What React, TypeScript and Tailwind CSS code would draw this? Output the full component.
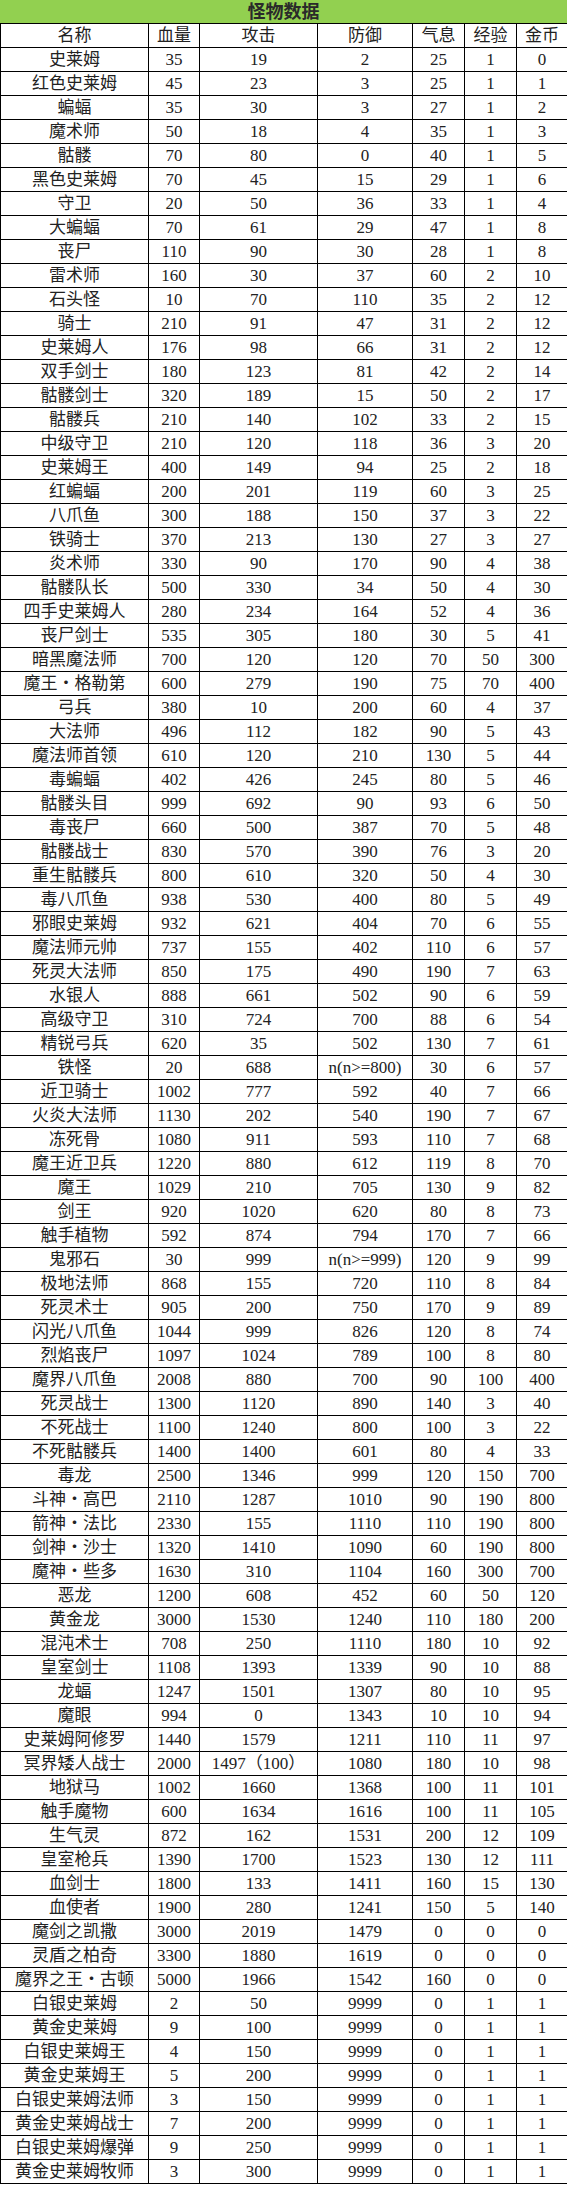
import React from "react";

type Row = [string, string, string, string, string, string, string];

const rows: Row[] = [
  ["史莱姆", "35", "19", "2", "25", "1", "0"],
  ["红色史莱姆", "45", "23", "3", "25", "1", "1"],
  ["蝙蝠", "35", "30", "3", "27", "1", "2"],
  ["魔术师", "50", "18", "4", "35", "1", "3"],
  ["骷髅", "70", "80", "0", "40", "1", "5"],
  ["黑色史莱姆", "70", "45", "15", "29", "1", "6"],
  ["守卫", "20", "50", "36", "33", "1", "4"],
  ["大蝙蝠", "70", "61", "29", "47", "1", "8"],
  ["丧尸", "110", "90", "30", "28", "1", "8"],
  ["雷术师", "160", "30", "37", "60", "2", "10"],
  ["石头怪", "10", "70", "110", "35", "2", "12"],
  ["骑士", "210", "91", "47", "31", "2", "12"],
  ["史莱姆人", "176", "98", "66", "31", "2", "12"],
  ["双手剑士", "180", "123", "81", "42", "2", "14"],
  ["骷髅剑士", "320", "189", "15", "50", "2", "17"],
  ["骷髅兵", "210", "140", "102", "33", "2", "15"],
  ["中级守卫", "210", "120", "118", "36", "3", "20"],
  ["史莱姆王", "400", "149", "94", "25", "2", "18"],
  ["红蝙蝠", "200", "201", "119", "60", "3", "25"],
  ["八爪鱼", "300", "188", "150", "37", "3", "22"],
  ["铁骑士", "370", "213", "130", "27", "3", "27"],
  ["炎术师", "330", "90", "170", "90", "4", "38"],
  ["骷髅队长", "500", "330", "34", "50", "4", "30"],
  ["四手史莱姆人", "280", "234", "164", "52", "4", "36"],
  ["丧尸剑士", "535", "305", "180", "30", "5", "41"],
  ["暗黑魔法师", "700", "120", "120", "70", "50", "300"],
  ["魔王・格勒第", "600", "279", "190", "75", "70", "400"],
  ["弓兵", "380", "10", "200", "60", "4", "37"],
  ["大法师", "496", "112", "182", "90", "5", "43"],
  ["魔法师首领", "610", "120", "210", "130", "5", "44"],
  ["毒蝙蝠", "402", "426", "245", "80", "5", "46"],
  ["骷髅头目", "999", "692", "90", "93", "6", "50"],
  ["毒丧尸", "660", "500", "387", "70", "5", "48"],
  ["骷髅战士", "830", "570", "390", "76", "3", "20"],
  ["重生骷髅兵", "800", "610", "320", "50", "4", "30"],
  ["毒八爪鱼", "938", "530", "400", "80", "5", "49"],
  ["邪眼史莱姆", "932", "621", "404", "70", "6", "55"],
  ["魔法师元帅", "737", "155", "402", "110", "6", "57"],
  ["死灵大法师", "850", "175", "490", "190", "7", "63"],
  ["水银人", "888", "661", "502", "90", "6", "59"],
  ["高级守卫", "310", "724", "700", "88", "6", "54"],
  ["精锐弓兵", "620", "35", "502", "130", "7", "61"],
  ["铁怪", "20", "688", "n(n>=800)", "30", "6", "57"],
  ["近卫骑士", "1002", "777", "592", "40", "7", "66"],
  ["火炎大法师", "1130", "202", "540", "190", "7", "67"],
  ["冻死骨", "1080", "911", "593", "110", "7", "68"],
  ["魔王近卫兵", "1220", "880", "612", "119", "8", "70"],
  ["魔王", "1029", "210", "705", "130", "9", "82"],
  ["剑王", "920", "1020", "620", "80", "8", "73"],
  ["触手植物", "592", "874", "794", "170", "7", "66"],
  ["鬼邪石", "30", "999", "n(n>=999)", "120", "9", "99"],
  ["极地法师", "868", "155", "720", "110", "8", "84"],
  ["死灵术士", "905", "200", "750", "170", "9", "89"],
  ["闪光八爪鱼", "1044", "999", "826", "120", "8", "74"],
  ["烈焰丧尸", "1097", "1024", "789", "100", "8", "80"],
  ["魔界八爪鱼", "2008", "880", "700", "90", "100", "400"],
  ["死灵战士", "1300", "1120", "890", "140", "3", "40"],
  ["不死战士", "1100", "1240", "800", "100", "3", "22"],
  ["不死骷髅兵", "1400", "1400", "601", "80", "4", "33"],
  ["毒龙", "2500", "1346", "999", "120", "150", "700"],
  ["斗神・高巴", "2110", "1287", "1010", "90", "190", "800"],
  ["箭神・法比", "2330", "155", "1110", "110", "190", "800"],
  ["剑神・沙士", "1320", "1410", "1090", "60", "190", "800"],
  ["魔神・些多", "1630", "310", "1104", "160", "300", "700"],
  ["恶龙", "1200", "608", "452", "60", "50", "120"],
  ["黄金龙", "3000", "1530", "1240", "110", "180", "200"],
  ["混沌术士", "708", "250", "1110", "180", "10", "92"],
  ["皇室剑士", "1108", "1393", "1339", "90", "10", "88"],
  ["龙蝠", "1247", "1501", "1307", "80", "10", "95"],
  ["魔眼", "994", "0", "1343", "10", "10", "94"],
  ["史莱姆阿修罗", "1440", "1579", "1211", "110", "11", "97"],
  ["冥界矮人战士", "2000", "1497（100）", "1080", "180", "10", "98"],
  ["地狱马", "1002", "1660", "1368", "100", "11", "101"],
  ["触手魔物", "600", "1634", "1616", "100", "11", "105"],
  ["生气灵", "872", "162", "1531", "200", "12", "109"],
  ["皇室枪兵", "1390", "1700", "1523", "130", "12", "111"],
  ["血剑士", "1800", "133", "1411", "160", "15", "130"],
  ["血使者", "1900", "280", "1241", "150", "5", "140"],
  ["魔剑之凯撒", "3000", "2019", "1479", "0", "0", "0"],
  ["灵盾之柏奇", "3300", "1880", "1619", "0", "0", "0"],
  ["魔界之王・古顿", "5000", "1966", "1542", "160", "0", "0"],
  ["白银史莱姆", "2", "50", "9999", "0", "1", "1"],
  ["黄金史莱姆", "9", "100", "9999", "0", "1", "1"],
  ["白银史莱姆王", "4", "150", "9999", "0", "1", "1"],
  ["黄金史莱姆王", "5", "200", "9999", "0", "1", "1"],
  ["白银史莱姆法师", "3", "150", "9999", "0", "1", "1"],
  ["黄金史莱姆战士", "7", "200", "9999", "0", "1", "1"],
  ["白银史莱姆爆弹", "9", "250", "9999", "0", "1", "1"],
  ["黄金史莱姆牧师", "3", "300", "9999", "0", "1", "1"],
];

const header: Row = ["名称", "血量", "攻击", "防御", "气息", "经验", "金币"];

function TableRow({ cells }: { cells: Row }) {
  return (
    <div className="grid grid-cols-[148px_51px_118px_95px_52px_52px_51px] border-l border-black">
      {cells.map((c, i) => (
        <div
          key={i}
          className="h-[24px] flex items-center justify-center border-r border-b border-black whitespace-nowrap leading-none"
        >
          {c}
        </div>
      ))}
    </div>
  );
}

export default function App() {
  return (
    <div
      className="w-[567px] bg-white text-[17px] text-[#222]"
      style={{ fontFamily: '"Liberation Serif", "Noto Sans CJK SC", serif' }}
    >
      {/* Title */}
      <div className="h-[24px] bg-[#92d050] border-b border-black flex items-center justify-center">
        <span className="font-bold text-[18px] text-[#2a2a2a] leading-none">怪物数据</span>
      </div>

      <TableRow cells={header} />
      {rows.map((r, i) => (
        <TableRow key={i} cells={r} />
      ))}
    </div>
  );
}
